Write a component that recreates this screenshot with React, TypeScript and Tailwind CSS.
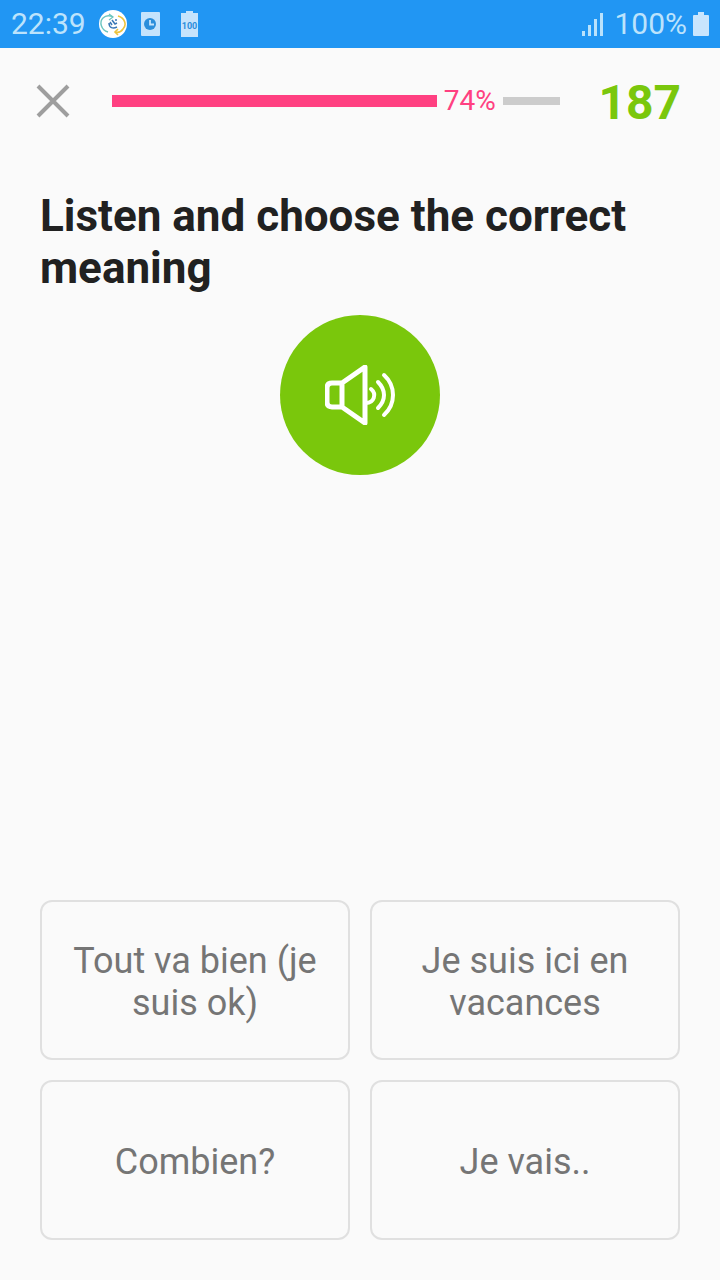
import React from "react";

const answers = [
  "Tout va bien (je suis ok)",
  "Je suis ici en vacances",
  "Combien?",
  "Je vais..",
];

const progress = 74;

function SyncIcon() {
  return (
    <svg viewBox="0 0 28 28" className="h-7 w-7" fill="none" aria-hidden="true">
      <circle cx="14" cy="14" r="14" fill="#fff" />
      <path d="M9 22C2 20 0 12 4 8c3-3 6-3 10-1" stroke="#6cc5c0" strokeWidth="1.4" />
      <path d="m10 4 4 3-4 3" stroke="#6cc5c0" strokeWidth="1.2" />
      <path d="M19 6c7 2 9 9 5 13-2 3-5 4-8 3" stroke="#edc33e" strokeWidth="1.6" />
      <path d="m19 19-3 3 3 3" stroke="#edc33e" strokeWidth="1.6" />
      <path d="M10 13c0 5 4 6 8 4M11 12l2 3M13 10l3 4 2-1" stroke="#3b78b5" strokeWidth="1.5" />
      <circle cx="17" cy="10" r="1" fill="#3b78b5" />
    </svg>
  );
}

function ClockIcon() {
  return (
    <svg viewBox="0 0 20 24" className="h-6 w-5" aria-hidden="true">
      <rect x="1" width="19" height="24" rx="1" fill="#c5e3fc" />
      <circle cx="10" cy="12" r="6" fill="#2b8edb" />
      <path d="M10 8v4.500h4" fill="none" stroke="#c5e3fc" strokeWidth="1.8" />
    </svg>
  );
}

function BatteryLevelIcon() {
  return (
    <svg viewBox="0 0 18 26" className="h-[26px] w-[18px]" aria-hidden="true">
      <path d="M0 2h5V0h7v2h5v24H0z" fill="#c5e3fc" />
      <text
        x="8.500"
        y="18"
        textAnchor="middle"
        fontFamily="Roboto, sans-serif"
        fontSize="9"
        fontWeight="700"
        fill="#2b8edb"
      >
        100
      </text>
    </svg>
  );
}

function SignalIcon() {
  return (
    <svg viewBox="0 0 22 24" className="h-6 w-[22px]" fill="#b9e2fc" aria-hidden="true">
      <rect x="0" y="19" width="3" height="5" />
      <rect x="6" y="13" width="3" height="11" />
      <rect x="12" y="7" width="3" height="17" />
      <rect x="18" y="1" width="3" height="23" />
    </svg>
  );
}

function StatusBar() {
  return (
    <div className="flex h-12 items-center justify-between bg-[#2196f3] px-[11px] text-[30px] leading-9 text-[#bce3fc]">
      <div className="flex items-center">
        <span>22:39</span>
        <div className="ml-[13px] flex items-center gap-[13px]">
          <SyncIcon />
          <ClockIcon />
        </div>
        <div className="ml-[21px]">
          <BatteryLevelIcon />
        </div>
      </div>
      <div className="flex items-center">
        <SignalIcon />
        <span className="ml-2.5">100%</span>
        <svg viewBox="0 0 16 24" className="ml-1.5 h-6 w-4" fill="#c9e5fd" aria-hidden="true">
          <path d="M1 3h4V0h6v3h4q1 0 1 1v19q0 1-1 1H1q-1 0-1-1V4q0-1 1-1z" />
        </svg>
      </div>
    </div>
  );
}

function ProgressBar({ value }: { value: number }) {
  return (
    <div
      role="progressbar"
      aria-label="Lesson progress"
      aria-valuenow={value}
      className="flex flex-1 items-center"
    >
      <div className="pr-[7px]" style={{ width: `${value}%` }}>
        <div className="h-3 bg-[#ff4081]" />
      </div>
      <span className="text-[28px] leading-8 text-[#ff4081]">{value}%</span>
      <div className="ml-[7px] h-2 flex-1 bg-[#cccccc]" />
    </div>
  );
}

export default function App() {
  return (
    <div className="flex min-h-screen flex-col bg-[#fafafa] font-[Roboto,sans-serif]">
      <StatusBar />

      <header className="flex h-[106px] items-center pr-[39px] pl-9">
        <button type="button" aria-label="Close" className="text-[#9e9e9e]">
          <svg viewBox="0 0 34 34" className="h-[34px] w-[34px]" fill="none" aria-hidden="true">
            <path d="m2 2 30 30M32 2 2 32" stroke="currentColor" strokeWidth="4" />
          </svg>
        </button>
        <div className="ml-[42px] flex flex-1">
          <ProgressBar value={progress} />
        </div>
        <span className="ml-[38px] pt-1 text-5xl font-bold text-[#7ac70c]">187</span>
      </header>

      <main className="flex flex-1 flex-col px-10 pt-9 pb-10">
        <h1 className="text-[44px] leading-[52px] font-bold text-[#212121]">
          Listen and choose the correct meaning
        </h1>

        <button
          type="button"
          aria-label="Play audio"
          className="mt-[21px] flex h-40 w-40 items-center justify-center self-center rounded-full bg-[#7ac70c] text-white"
        >
          <svg
            viewBox="0 0 70 60"
            className="h-[60px] w-[70px]"
            fill="none"
            stroke="currentColor"
            strokeWidth="4"
            strokeLinecap="round"
            strokeLinejoin="round"
            aria-hidden="true"
          >
            <path d="M17 18H7q-5 0-5 5v14q0 5 5 5h10zM17 18 40 2v56L17 42" strokeWidth="5" />
            <path d="M46 24c6 5 3 14-5 14" />
            <path d="M53 17c8 8 8 18 0 26" />
            <path d="M59 10c12 11 12 29 0 40" />
          </svg>
        </button>

        {/* Answers */}
        <div className="mt-auto grid grid-cols-2 gap-5">
          {answers.map((answer) => (
            <button
              key={answer}
              type="button"
              className="min-h-40 rounded-xl border-2 border-[#e0e0e0] px-6 pt-1 text-4xl leading-[42px] text-[#757575]"
            >
              {answer}
            </button>
          ))}
        </div>
      </main>
    </div>
  );
}
